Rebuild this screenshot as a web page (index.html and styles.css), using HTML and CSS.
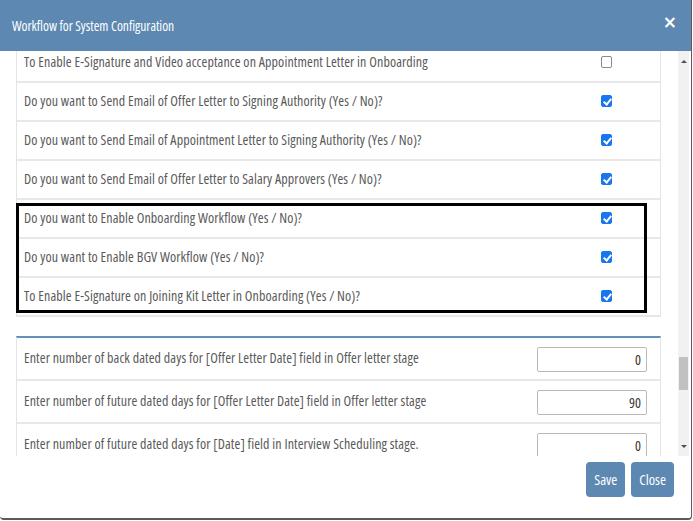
FILE: index.html
```html
<!DOCTYPE html>
<html lang="en">
<head>
<meta charset="utf-8">
<title>Workflow for System Configuration</title>
<link rel="stylesheet" href="styles.css">
</head>
<body>
<div class="modal">
  <header class="modal-header">
    <h4 class="modal-title">Workflow for System Configuration</h4>
    <button class="close" type="button">&times;</button>
  </header>
  <div class="modal-main">
    <div class="modal-body">
      <div class="body-inner">
        <div class="cfg-list">
          <div class="cfg-row"><span class="label">To Enable E-Signature and Video acceptance on Appointment Letter in Onboarding</span><input class="chk" type="checkbox"></div>
          <div class="cfg-row"><span class="label">Do you want to Send Email of Offer Letter to Signing Authority (Yes / No)?</span><input class="chk" type="checkbox" checked></div>
          <div class="cfg-row"><span class="label">Do you want to Send Email of Appointment Letter to Signing Authority (Yes / No)?</span><input class="chk" type="checkbox" checked></div>
          <div class="cfg-row"><span class="label">Do you want to Send Email of Offer Letter to Salary Approvers (Yes / No)?</span><input class="chk" type="checkbox" checked></div>
          <div class="group">
            <div class="cfg-row"><span class="label">Do you want to Enable Onboarding Workflow (Yes / No)?</span><input class="chk" type="checkbox" checked></div>
            <div class="cfg-row"><span class="label">Do you want to Enable BGV Workflow (Yes / No)?</span><input class="chk" type="checkbox" checked></div>
            <div class="cfg-row"><span class="label">To Enable E-Signature on Joining Kit Letter in Onboarding (Yes / No)?</span><input class="chk" type="checkbox" checked></div>
            <div class="highlight"></div>
          </div>
        </div>
        <div class="num-list">
          <div class="num-row"><span class="label">Enter number of back dated days for [Offer Letter Date] field in Offer letter stage</span><input class="num" type="text" value="0"></div>
          <div class="num-row"><span class="label">Enter number of future dated days for [Offer Letter Date] field in Offer letter stage</span><input class="num" type="text" value="90"></div>
          <div class="num-row"><span class="label">Enter number of future dated days for [Date] field in Interview Scheduling stage.</span><input class="num" type="text" value="0"></div>
        </div>
      </div>
    </div>
    <div class="scrollbar">
      <span class="arrow up"></span>
      <div class="track"><div class="thumb" style="margin-top: 289px"></div></div>
      <span class="arrow down"></span>
    </div>
  </div>
  <footer class="modal-footer">
    <button class="btn" type="button">Save</button>
    <button class="btn" type="button">Close</button>
  </footer>
</div>
</body>
</html>
```
FILE: styles.css
```css
* { box-sizing: border-box; }

body {
  margin: 0;
  background: #fff;
  font-family: "Open Sans", "Liberation Sans", sans-serif;
  font-stretch: 75%;
}

.modal {
  width: 692px;
  height: 520px;
  display: flex;
  flex-direction: column;
  background: #fff;
  border-right: 1px solid #5a5a5a;
  border-bottom: 2px solid #5a5a5a;
  border-radius: 0 0 4px 4px;
  overflow: hidden;
}

.modal-header {
  height: 51px;
  flex: none;
  display: flex;
  align-items: center;
  justify-content: space-between;
  padding: 0 14px 0 12px;
  background: #5c88b1;
  color: #fff;
}

.modal-title {
  margin: 0;
  font-size: 13.5px;
  font-weight: normal;
}

.close {
  background: none;
  border: 0;
  padding: 0;
  margin-top: -7px;
  color: #fff;
  font-family: "DejaVu Sans", sans-serif;
  font-size: 17px;
  font-weight: bold;
  line-height: 1;
}

.modal-main {
  height: 405px;
  flex: none;
  display: flex;
}

.modal-body {
  flex: 1;
  overflow: hidden;
  padding: 0 17px 0 16px;
}

.body-inner { margin-top: -7px; }

.cfg-list {
  border-left: 1px solid #e4e4e4;
  border-right: 1px solid #e4e4e4;
}

.cfg-row {
  height: 39px;
  display: flex;
  align-items: center;
  padding: 0 48px 2px 7px;
  border-bottom: 2px solid #e8e8e8;
  font-size: 14px;
  letter-spacing: 0.11px;
  color: #5a5a5a;
}

.label { flex: 1; }

.chk {
  appearance: none;
  -webkit-appearance: none;
  margin: 0;
  width: 11px;
  height: 12px;
  border: 1px solid #8a8a8a;
  border-radius: 2px;
  background: #fff;
  position: relative;
}

.chk:checked {
  border-color: #1877ef;
  background: #1877ef;
}

.chk:checked::after {
  content: "";
  position: absolute;
  left: 3px;
  top: 1px;
  width: 3px;
  height: 6px;
  border: solid #fff;
  border-width: 0 2px 2px 0;
  transform: rotate(40deg);
}

.group { position: relative; }

.highlight {
  position: absolute;
  left: -1px;
  top: 3px;
  bottom: 4px;
  width: 631px;
  border: 3px solid #000;
  pointer-events: none;
}

.num-list {
  margin-top: 19px;
  border-top: 2px solid #6690b9;
  border-left: 1px solid #e4e4e4;
  border-right: 1px solid #e4e4e4;
}

.num-row {
  height: 43px;
  display: flex;
  align-items: center;
  padding: 0 13px 2px 7px;
  border-bottom: 2px solid #e8e8e8;
  font-size: 14px;
  letter-spacing: 0.11px;
  color: #5a5a5a;
}

.num {
  width: 110px;
  height: 25px;
  margin-top: 4px;
  padding: 0 5px;
  border: 1px solid #b9b9b9;
  border-radius: 2px;
  text-align: right;
  font-family: inherit;
  font-stretch: 75%;
  font-size: 14px;
  color: #333;
}

.scrollbar {
  width: 11px;
  margin-right: 2px;
  display: flex;
  flex-direction: column;
  align-items: center;
  background: #f1f1f1;
}

.arrow {
  width: 0;
  height: 0;
  border-left: 3px solid transparent;
  border-right: 3px solid transparent;
}

.arrow.up {
  margin: 9px 0 5px;
  border-bottom: 3px solid #505050;
}

.arrow.down {
  margin: 5px 0 8px;
  border-top: 3px solid #505050;
}

.track {
  flex: 1;
  width: 100%;
  display: flex;
  flex-direction: column;
  align-items: center;
}

.thumb {
  width: 9px;
  height: 33px;
  background: #c1c1c1;
}

.modal-footer {
  flex: 1;
  display: flex;
  justify-content: flex-end;
  align-items: flex-start;
  gap: 6px;
  padding: 6px 17px 0 0;
}

.btn {
  height: 35px;
  padding: 0 8px;
  border: 0;
  border-radius: 4px;
  background: #5c88b1;
  color: #fff;
  font-family: inherit;
  font-stretch: 75%;
  font-size: 14.5px;
}
```
